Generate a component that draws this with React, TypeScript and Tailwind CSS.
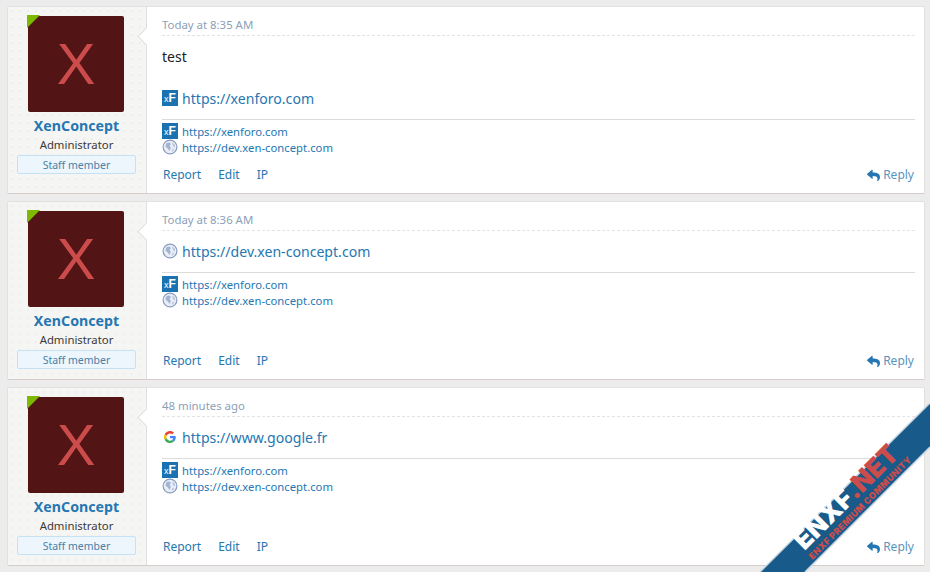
import { FaReply } from "react-icons/fa";

const FONT = "font-['Noto_Sans','Open_Sans',sans-serif]";

function XfIcon() {
  return (
    <span className="flex h-[16px] w-[16px] shrink-0 items-end justify-center bg-[#1b72b0] pb-[2px] font-['Liberation_Sans',sans-serif] text-[12px] leading-none font-bold text-white">
      <span className="text-[9px] font-normal">x</span>F
    </span>
  );
}

function GlobeIcon() {
  return (
    <svg width="16" height="16" viewBox="0 0 16 16" className="shrink-0">
      <circle cx="8" cy="8" r="6.900" fill="#e8edf6" stroke="#8a9cc0" strokeWidth="1.200" />
      <path d="M4.500 3.900 7.500 3.400 9 5 7.500 6.800 8.800 8.800 7.600 12 5.800 9.400 3.400 7.400Z" fill="#a3b4d2" />
      <path d="M10.200 3.400 12.800 5.600 13 8.600 11 7.200Z" fill="#b7c5dd" />
      <path d="M10.400 10 12.200 9.800 11 12.400 9.800 12.200Z" fill="#b7c5dd" />
    </svg>
  );
}

function GoogleIcon() {
  return (
    <span className="flex h-[16px] w-[16px] shrink-0 items-center justify-center">
      <svg width="12" height="12" viewBox="0 0 48 48">
        <path fill="#EA4335" d="M24 9.500c3.500 0 6.700 1.200 9.200 3.600l6.900-6.900C35.900 2.400 30.500 0 24 0 14.600 0 6.500 5.400 2.600 13.200l8 6.200C12.500 13.700 17.800 9.500 24 9.500z" />
        <path fill="#4285F4" d="M46.900 24.500c0-1.600-.1-3.100-.4-4.500H24v9h12.900c-.6 3-2.200 5.500-4.700 7.200l7.700 6c4.500-4.200 7-10.300 7-17.700z" />
        <path fill="#FBBC05" d="M10.500 28.600A14.500 14.500 0 0 1 10.500 19.400l-8-6.200a24 24 0 0 0 0 21.600z" />
        <path fill="#34A853" d="M24 48c6.500 0 11.900-2.100 15.900-5.800l-7.700-6c-2.200 1.400-4.900 2.300-8.200 2.300-6.200 0-11.500-4.200-13.400-9.900l-8 6.200C6.500 42.600 14.600 48 24 48z" />
      </svg>
    </span>
  );
}

function LinkRow({ icon, href, big }: { icon: React.ReactNode; href: string; big?: boolean }) {
  return (
    <div
      className={`flex items-center gap-[4px] text-[#2577b1] ${
        big ? "h-[20px] text-[14.100px] leading-[20px]" : "h-[16px] text-[11.300px] leading-[16px]"
      }`}
    >
      {icon}
      <span className="pt-[2px]">{href}</span>
    </div>
  );
}

function Card({
  date,
  height,
  children,
}: {
  date: string;
  height: string;
  children: React.ReactNode;
}) {
  return (
    <article className={`relative flex rounded-[2px] border border-[#e3e0de] border-b-[#d5cdc9] bg-white ${height}`}>
      <aside className="flex w-[139px] shrink-0 flex-col items-center rounded-l-[2px] border-r border-[#dfdfdf] bg-[#f5f5f4] bg-[radial-gradient(#eeeeeb_1px,transparent_1px)] bg-[length:8px_8px] pt-[9px]">
        <div className="relative -ml-[2px] flex h-[96px] w-[96px] items-center justify-center rounded-[2px] bg-[#521414] font-['Liberation_Sans',sans-serif] text-[58px] leading-none text-[#cc4c4c]">
          X
          <span className="absolute top-[-1px] left-[-1px] h-[13px] w-[13px] bg-[#7fb800] [clip-path:polygon(0_0,100%_0,0_100%)]" />
        </div>
        <div className="mt-[4px] -ml-[1px] text-[14.200px] leading-[20px] font-bold text-[#2577b1]">XenConcept</div>
        <div className="-ml-[1px] text-[11.350px] leading-[17px] text-[#3a3a3a]">Administrator</div>
        <div className="mt-[2px] -ml-[1px] flex h-[19px] w-[119px] items-center justify-center rounded-[2px] border border-[#c5e2f5] bg-[#edf6fd] pt-[2px] text-[10.500px] text-[#4a7fa5]">
          Staff member
        </div>
      </aside>
      {/* little arrow from the user block into the message */}
      <span className="absolute top-[23px] left-[132px] h-[13px] w-[13px] rotate-45 border-b border-l border-[#dfdfdf] bg-white" />
      <div className="relative flex min-w-0 flex-1 flex-col pr-[9px] pl-[15px]">
        <div className="flex h-[29px] shrink-0 items-end border-b border-dashed border-[#e3e3e3] pb-[2px] text-[11.400px] text-[#8c9fb8]">
          {date}
        </div>
        {children}
        <div className="mt-auto mb-[1px] flex h-[36px] shrink-0 items-center pt-[2px] text-[12px] text-[#2577b1]">
          <span className="ml-[1px]">Report</span>
          <span className="ml-[17px]">Edit</span>
          <span className="ml-[17px]">IP</span>
          <span className="mr-[1px] ml-auto flex items-center gap-[3px] text-[#5b93bd]">
            <FaReply className="text-[13px] text-[#2577b1]" />
            Reply
          </span>
        </div>
      </div>
    </article>
  );
}

function Signature() {
  return (
    <div className="flex shrink-0 flex-col border-t border-[#dcdcdc] pt-[3px]">
      <LinkRow icon={<XfIcon />} href="https://xenforo.com" />
      <LinkRow icon={<GlobeIcon />} href="https://dev.xen-concept.com" />
    </div>
  );
}

export default function App() {
  return (
    <div className={`relative h-[572px] w-[930px] overflow-hidden bg-[#ececec] ${FONT}`}>
      <div className="flex flex-col gap-[7px] pt-[6px] pr-[5px] pl-[7px]">
        <Card date="Today at 8:35 AM" height="h-[188px]">
          <div className="mt-[11px] text-[14px] leading-[20px] text-[#222]">test</div>
          <div className="mt-[21px] mb-[11px]">
            <LinkRow big icon={<XfIcon />} href="https://xenforo.com" />
          </div>
          <Signature />
        </Card>
        <Card date="Today at 8:36 AM" height="h-[179px]">
          <div className="mt-[10px] mb-[11px]">
            <LinkRow big icon={<GlobeIcon />} href="https://dev.xen-concept.com" />
          </div>
          <Signature />
        </Card>
        <Card date="48 minutes ago" height="h-[179px]">
          <div className="mt-[10px] mb-[11px]">
            <LinkRow big icon={<GoogleIcon />} href="https://www.google.fr" />
          </div>
          <Signature />
        </Card>
      </div>

      {/* corner ribbon */}
      <svg className="absolute top-0 left-0" width="930" height="572" viewBox="0 0 930 572">
        <polygon points="930,403 760,572 805,572 930,447" fill="#185a8a" />
        <path d="M930 403 760 572M930 447 805 572" stroke="#c9d6df" strokeWidth="1.500" />
      </svg>
      <div className="absolute top-[484px] left-[781px] flex w-[130px] -rotate-45 justify-center font-['Inter',sans-serif] text-[26px] leading-none font-black whitespace-nowrap">
        <span className="text-white">ENXF</span>
        <span className="text-[#cc4c4c]">.NET</span>
      </div>
      <div className="absolute top-[507px] left-[791px] w-[130px] -rotate-45 text-center font-['Inter',sans-serif] text-[9px] leading-none font-black tracking-[0.4px] whitespace-nowrap text-[#cc4c4c]">
        ENXF PREMIUM COMMUNITY
      </div>
    </div>
  );
}
